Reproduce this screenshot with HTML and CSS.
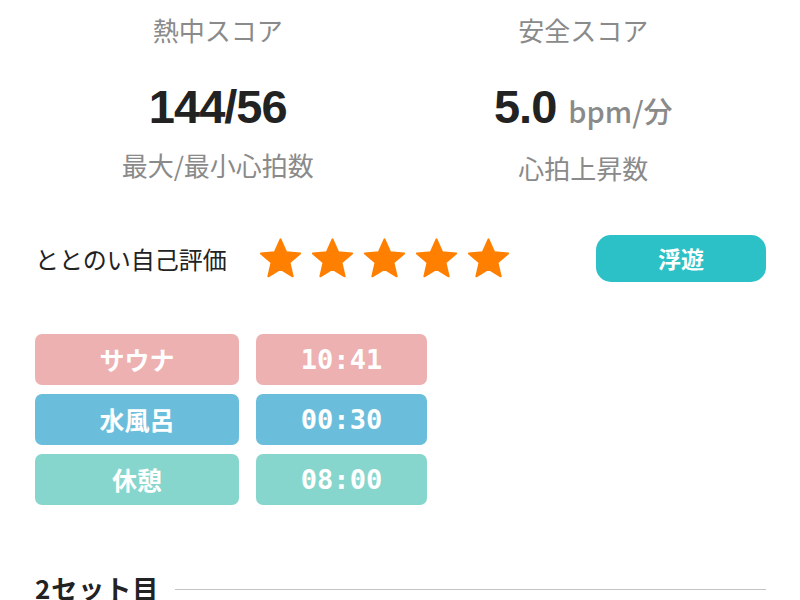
FILE: index.html
```html
<!DOCTYPE html>
<html lang="ja">
<head>
  <meta charset="UTF-8">
  <title>サウナ記録</title>
  <link rel="stylesheet" href="styles.css">
</head>
<body>

<div class="container">
  <div class="scores">
    <div class="score">
      <div class="score-title">熱中スコア</div>
      <div class="score-value">144/56</div>
      <div class="score-label">最大/最小心拍数</div>
    </div>
    <div class="score">
      <div class="score-title">安全スコア</div>
      <div class="score-value">5.0<span class="unit">bpm/分</span></div>
      <div class="score-label">心拍上昇数</div>
    </div>
  </div>

  <div class="rating-row">
    <div class="rating-label">ととのい自己評価</div>
    <div class="stars">
      <svg class="star" viewBox="0 0 24 24"><path d="M12 2.2l2.9 6.6 7.1.6-5.4 4.7 1.6 7-6.2-3.8-6.2 3.8 1.6-7L2 9.4l7.1-.6z"/></svg>
      <svg class="star" viewBox="0 0 24 24"><path d="M12 2.2l2.9 6.6 7.1.6-5.4 4.7 1.6 7-6.2-3.8-6.2 3.8 1.6-7L2 9.4l7.1-.6z"/></svg>
      <svg class="star" viewBox="0 0 24 24"><path d="M12 2.2l2.9 6.6 7.1.6-5.4 4.7 1.6 7-6.2-3.8-6.2 3.8 1.6-7L2 9.4l7.1-.6z"/></svg>
      <svg class="star" viewBox="0 0 24 24"><path d="M12 2.2l2.9 6.6 7.1.6-5.4 4.7 1.6 7-6.2-3.8-6.2 3.8 1.6-7L2 9.4l7.1-.6z"/></svg>
      <svg class="star" viewBox="0 0 24 24"><path d="M12 2.2l2.9 6.6 7.1.6-5.4 4.7 1.6 7-6.2-3.8-6.2 3.8 1.6-7L2 9.4l7.1-.6z"/></svg>
    </div>
    <div class="badge">浮遊</div>
  </div>

  <div class="steps">
    <div class="step sauna">サウナ</div>
    <div class="step time sauna">10:41</div>
    <div class="step water">水風呂</div>
    <div class="step time water">00:30</div>
    <div class="step rest">休憩</div>
    <div class="step time rest">08:00</div>
  </div>

  <div class="set-head">
    <span class="set-title">2セット目</span>
    <span class="set-line"></span>
  </div>
</div>

</body>
</html>
```

FILE: styles.css
```css
body {
  margin: 0;
  background-color: #ffffff;
  font-family: "Noto Sans CJK JP", "Noto Sans", sans-serif;
  color: #222222;
}
.container {
  padding: 12px 34px 0 35px;
}
.scores {
  display: grid;
  grid-template-columns: 1fr 1fr;
}
.score {
  text-align: center;
}
.score-title {
  font-size: 26px;
  line-height: 36px;
  color: #8a8a8a;
}
.score-value {
  margin-top: 34px;
  font-family: "Liberation Sans", sans-serif;
  font-weight: bold;
  font-size: 47px;
  line-height: 50px;
  letter-spacing: -1px;
  color: #222222;
}
.unit {
  margin-left: 12px;
  font-family: "Noto Sans CJK JP", sans-serif;
  font-weight: 500;
  font-size: 29px;
  letter-spacing: 0;
  color: #8a8a8a;
}
.score-label {
  margin-top: 15px;
  font-size: 26px;
  line-height: 36px;
  color: #8a8a8a;
}
.rating-row {
  display: flex;
  align-items: center;
  margin-top: 49px;
}
.rating-label {
  font-size: 24px;
  width: 222px;
  color: #222222;
}
.stars {
  display: flex;
  gap: 5px;
}
.star {
  width: 47px;
  height: 47px;
  fill: #ff7f00;
  stroke: #ff7f00;
  stroke-width: 1;
  stroke-linejoin: round;
}
.badge {
  margin-left: auto;
  width: 170px;
  height: 47px;
  line-height: 47px;
  border-radius: 15px;
  background-color: #2cc1c6;
  color: #ffffff;
  font-size: 23px;
  font-weight: bold;
  text-align: center;
}
.steps {
  display: grid;
  grid-template-columns: 204px 171px;
  column-gap: 17px;
  row-gap: 9px;
  margin-top: 52px;
}
.step {
  height: 51px;
  line-height: 51px;
  border-radius: 7px;
  color: #ffffff;
  font-size: 25px;
  font-weight: bold;
  text-align: center;
}
.time {
  font-family: "DejaVu Sans Mono", monospace;
  font-size: 27px;
  font-weight: bold;
}
.sauna {
  background-color: #edb1b1;
}
.water {
  background-color: #6bbedb;
}
.rest {
  background-color: #87d6cd;
}
.set-head {
  display: flex;
  align-items: center;
  gap: 16px;
  margin-top: 64px;
}
.set-title {
  font-size: 26px;
  font-weight: bold;
  letter-spacing: 1px;
  color: #222222;
}
.set-line {
  flex: 1;
  height: 1px;
  margin-top: 3px;
  background-color: #c4c4c4;
}
```
